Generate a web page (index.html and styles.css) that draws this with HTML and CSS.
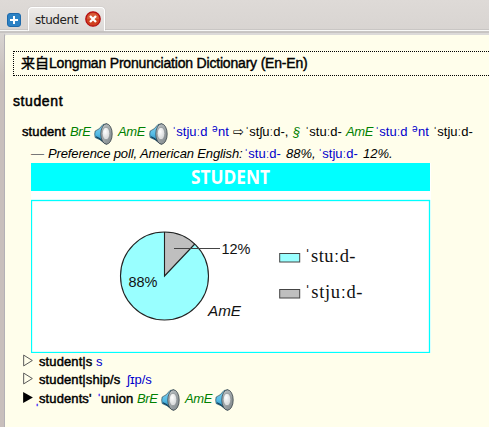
FILE: index.html
```html
<!DOCTYPE html>
<html lang="en">
<head>
<meta charset="utf-8">
<title>student</title>
<link rel="stylesheet" href="styles.css">
</head>
<body>
<svg width="0" height="0" class="defs">
  <defs>
    <linearGradient id="cone" x1="0" y1="0" x2="0" y2="1"><stop offset="0" stop-color="#8ad2ee"/><stop offset=".5" stop-color="#55bce6"/><stop offset="1" stop-color="#1a78a8"/></linearGradient>
    <linearGradient id="rim" x1="0" y1="0" x2="1" y2="1"><stop offset="0" stop-color="#c5cbcd"/><stop offset="1" stop-color="#7b8387"/></linearGradient>
    <radialGradient id="dome" cx=".4" cy=".35"><stop offset="0" stop-color="#fff"/><stop offset="1" stop-color="#dcdedf"/></radialGradient>
    <symbol id="speaker" viewBox="0 0 20 22">
      <path d="M1.200 8Q5 7 9 1.500L13 .8V21.200L11 20.500Q6 16 1.200 14.500Q.2 11 1.200 8Z" fill="url(#cone)" stroke="#23485c" stroke-width=".7"/>
      <path d="M2 13.800Q6 15 10 19.500" fill="none" stroke="#103f5b" stroke-width="1.200"/>
      <ellipse cx="12.500" cy="11" rx="5.700" ry="10.200" fill="url(#rim)" stroke="#3c464b" stroke-width=".8"/>
      <ellipse cx="12" cy="10.500" rx="3.800" ry="6.300" fill="url(#dome)" stroke="#7b8285" stroke-width=".6"/>
    </symbol>
  </defs>
</svg>
<header class="tabs">
  <svg class="add" width="14" height="14" viewBox="0 0 14 14"><rect x=".5" y=".5" width="13" height="13" rx="2.5" fill="#2d82c4" stroke="#1e69aa"/><path d="M7 3V11M3 7H11" stroke="#fff" stroke-width="2"/></svg>
  <div class="tab"><span>student</span>
    <svg width="16" height="16" viewBox="0 0 16 16"><circle cx="8" cy="8" r="7.2" fill="#cf4120" stroke="#b50c10" stroke-width="1.3"/><path d="M2 8A6 6 0 0 1 14 8Z" fill="#dc6a48" opacity=".6"/><path d="M5 5L11 11M11 5L5 11" stroke="#fff" stroke-width="2.3"/></svg>
  </div>
</header>
<main class="page">
  <div class="source"><span class="cjk">来自</span><span class="source-name">Longman Pronunciation Dictionary (En-En)</span></div>
  <h1>student</h1>
  <p class="row entry">
    <b>student</b><i class="tag">BrE</i><svg class="snd"><use href="#speaker"/></svg><i class="tag">AmE</i><svg class="snd"><use href="#speaker"/></svg><span class="ipa">ˈstjuːd</span><span class="ipa schwa">ə</span><span class="ipa">nt</span><span class="arrow">⇨</span><span>ˈstʃuːd-,</span><i class="tag">§</i><span>ˈstuːd-</span><i class="tag">AmE</i><span class="ipa">ˈstuːd</span><span class="ipa schwa">ə</span><span class="ipa">nt</span><span>ˈstjuːd-</span>
  </p>
  <p class="row poll">
    <span class="dash">—</span><i class="intro">Preference poll, American English:</i><span class="ipa">ˈstuːd-</span><i>88%,</i><span class="ipa">ˈstjuːd-</span><i>12%.</i>
  </p>
  <svg class="chart" width="400" height="190" viewBox="0 0 400 190">
    <rect width="400" height="190" fill="#fff"/>
    <rect width="399" height="28" fill="#0ff"/>
    <text x="160" y="21" textLength="79" lengthAdjust="spacingAndGlyphs" class="chart-title">STUDENT</text>
    <rect x=".5" y="37.5" width="398" height="152" fill="none" stroke="#0ff" stroke-width="1.3"/>
    <circle cx="133.5" cy="113" r="44" fill="#9ff"/>
    <path d="M133.5 113V69A44 44 0 0 1 163.8 81Z" fill="#bfbfbf"/>
    <g fill="none" stroke="#222" stroke-width="1.1"><circle cx="133.5" cy="113" r="44"/><path d="M133.5 69V113L163.8 81"/></g>
    <path d="M143 85.5H189" stroke="#444"/>
    <g class="chart-label">
      <text x="190.500" y="91" textLength="29" lengthAdjust="spacingAndGlyphs">12%</text>
      <text x="97.500" y="123.500" textLength="29" lengthAdjust="spacingAndGlyphs">88%</text>
      <text x="177" y="152.500" textLength="33" lengthAdjust="spacingAndGlyphs" class="region">AmE</text>
    </g>
    <rect x="248.700" y="90.500" width="20" height="8.500" fill="#9ff" stroke="#444"/>
    <rect x="248.700" y="126.500" width="20" height="8.500" fill="#bfbfbf" stroke="#444"/>
    <g class="legend">
      <text x="273.500" y="99" textLength="51">ˈstuːd-</text>
      <text x="273.500" y="135" textLength="58">ˈstjuːd-</text>
    </g>
  </svg>
  <p class="row derived"><svg class="tri" viewBox="0 0 9 12"><path d="M.5 1L8.500 6L.5 11Z" fill="none" stroke="#555" stroke-width=".9"/></svg><b>student|s</b><span class="ipa">s</span></p>
  <p class="row derived ship"><svg class="tri" viewBox="0 0 9 12"><path d="M.5 1L8.500 6L.5 11Z" fill="none" stroke="#555" stroke-width=".9"/></svg><b>student|ship/s</b><span class="ipa">ʃɪp/s</span></p>
  <p class="row union"><svg class="tri" viewBox="0 0 9 12"><path d="M0 1L9 6L0 11Z"/></svg><span class="ipa mark">ˌ</span><b>students'</b><span class="ipa mark">ˈ</span><b>union</b><i class="tag">BrE</i><svg class="snd"><use href="#speaker"/></svg><i class="tag">AmE</i><svg class="snd"><use href="#speaker"/></svg></p>
</main>
</body>
</html>
```
FILE: styles.css
```css
* { box-sizing: border-box; }
body {
  margin: 0;
  height: 427px;
  overflow: hidden;
  background: linear-gradient(#dedad7, #d8d4d1 34px, #c8bfbc 75px);
  font: 13px/18px "Liberation Sans", "Noto Sans CJK SC", sans-serif;
  color: #000;
}
.defs { display: block; }
.tabs {
  display: flex;
  height: 33px;
  padding: 7px 0 0 7px;
  background: linear-gradient(#dedad7, #d8d4d1);
  border-bottom: 1px solid #c7c4c2;
  box-shadow: inset 0 -1px #c9c6c4, inset 0 -2px #f8f8f7, inset 0 -3px #c9c6c4;
}
.add { margin-top: 6px; }
.tab {
  display: flex;
  justify-content: space-between;
  width: 77px;
  height: 24px;
  margin-left: 7px;
  padding: 4px 3px 0 7px;
  border: 1px solid #fff;
  border-bottom: 0;
  border-radius: 4px 4px 0 0;
  background: linear-gradient(#eceae8, #dbd8d6);
  box-shadow: 0 0 1px #999;
  font: 12px/17px "DejaVu Sans", sans-serif;
  color: #222;
}
.tab svg { margin-top: -1px; flex: none; }
.tab span { letter-spacing: -.6px; margin-left: -1px; letter-spacing: -.4px; }
.page {
  height: 394px;
  margin: 0 -4px 0 4px;
  padding: 16px 0 0 8px;
  background: #fffeeb;
  border-left: 1px solid #b3b0b5;
  border-top: 2px solid #dcdad9;
  border-top-left-radius: 3px;
}
.source {
  display: flex;
  height: 25px;
  padding: 2px 0 0 7px;
  border: 1px dotted #000;
  font-size: 14px;
  -webkit-text-stroke: .4px #000;
  white-space: nowrap;
}
.source-name { letter-spacing: -.19px; }
h1 {
  margin: 16px 0 0;
  font-size: 14px;
  line-height: 18px;
  font-weight: 400;
  letter-spacing: .6px;
  -webkit-text-stroke: .5px #000;
}
.row { display: grid; margin: 0; height: 18px; white-space: nowrap; align-items: start; }
b { font-weight: 400; letter-spacing: .1px; -webkit-text-stroke: .45px #000; }
.tag { color: #008000; letter-spacing: -.4px; }
.ipa { color: #00c; }
.mark { -webkit-text-stroke: .5px #4a4aff; }
.schwa { font-size: 10px; margin-top: -3px; }
.arrow { font-family: "DejaVu Sans", sans-serif; font-size: 13px; }
.snd { width: 20px; height: 22px; }
.entry {
  height: 22px;
  margin: 13px 0 0 9px;
  grid-template-columns: 48px 24px 24px 31px 23px 40px 6px 15px 12px 48px 12px 41px 29px 37px 6px 15px 50px;
}
.poll {
  margin: 0 0 0 18px;
  grid-template-columns: 17px 196px 42px 32px 45px 40px;
}
.intro { letter-spacing: -.13px; }
.dash { color: #777; }
.chart { display: block; margin-left: 18px; }
.chart-title { font: 700 20px "Open Sans", sans-serif; fill: #fff; }
.chart-label { font: 14px "Liberation Sans", sans-serif; fill: #111; }
.region { font-size: 15px; font-style: italic; }
.legend { font: 18.5px "Liberation Serif", serif; fill: #111; }
.derived {
  margin-left: 10px;
  grid-template-columns: 16px 57px 40px;
}
.ship { grid-template-columns: 16px 88px 40px; }
.union {
  margin: 1px 0 0 10px;
  height: 22px;
  grid-template-columns: 12px 4px 58px 4px 36px 24px 24px 30px 24px;
}
.union .snd { margin-top: -1px; }
.tri { width: 10px; height: 13px; margin-top: 1px; }
```
